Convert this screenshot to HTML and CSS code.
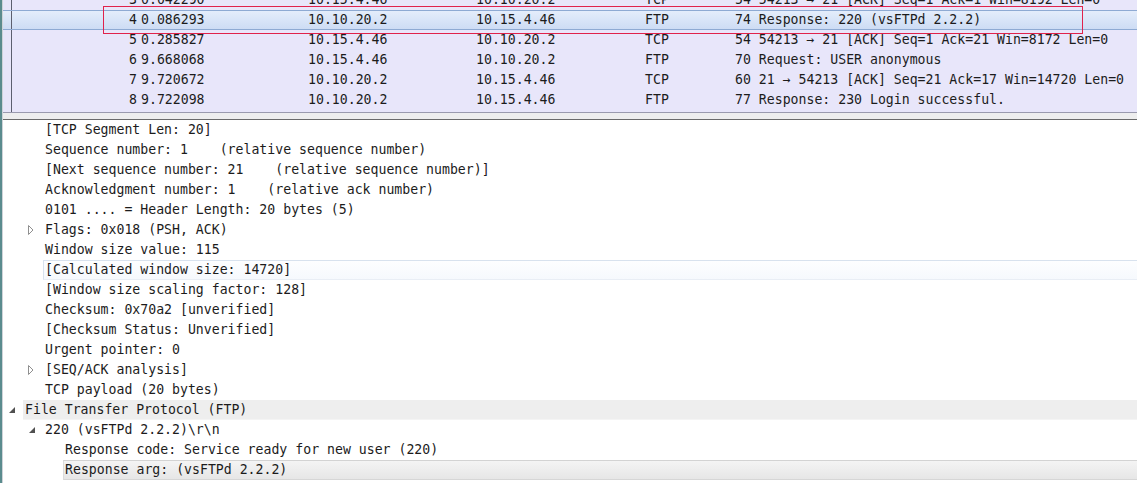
FILE: index.html
```html
<!DOCTYPE html>
<html>
<head>
<meta charset="utf-8">
<link rel="stylesheet" href="styles.css">
</head>
<body>
<div class="app">
  <div class="stripe"></div>
  <div class="main">
    <div class="plist">
      <div class="prows">
        <div class="prow"><span class="g"></span><span class="no">3</span><span class="t">0.042290</span><span class="src">10.15.4.46</span><span class="dst">10.10.20.2</span><span class="pr">TCP</span><span class="info">54 54213 → 21 [ACK] Seq=1 Ack=1 Win=8192 Len=0</span></div>
        <div class="prow sel"><span class="g"></span><span class="no">4</span><span class="t">0.086293</span><span class="src">10.10.20.2</span><span class="dst">10.15.4.46</span><span class="pr">FTP</span><span class="info">74 Response: 220 (vsFTPd 2.2.2)</span></div>
        <div class="prow"><span class="g"></span><span class="no">5</span><span class="t">0.285827</span><span class="src">10.15.4.46</span><span class="dst">10.10.20.2</span><span class="pr">TCP</span><span class="info">54 54213 → 21 [ACK] Seq=1 Ack=21 Win=8172 Len=0</span></div>
        <div class="prow"><span class="g"></span><span class="no">6</span><span class="t">9.668068</span><span class="src">10.15.4.46</span><span class="dst">10.10.20.2</span><span class="pr">FTP</span><span class="info">70 Request: USER anonymous</span></div>
        <div class="prow"><span class="g"></span><span class="no">7</span><span class="t">9.720672</span><span class="src">10.10.20.2</span><span class="dst">10.15.4.46</span><span class="pr">TCP</span><span class="info">60 21 → 54213 [ACK] Seq=21 Ack=17 Win=14720 Len=0</span></div>
        <div class="prow"><span class="g"></span><span class="no">8</span><span class="t">9.722098</span><span class="src">10.10.20.2</span><span class="dst">10.15.4.46</span><span class="pr">FTP</span><span class="info">77 Response: 230 Login successful.</span></div>
        <div class="prow"><span class="g"></span></div>
      </div>
      <div class="mark"></div>
    </div>
    <div class="splitter"></div>
    <div class="details">
      <div class="drow l1"><span class="tg"></span><span class="lb">[TCP Segment Len: 20]</span></div>
      <div class="drow l1"><span class="tg"></span><span class="lb">Sequence number: 1    (relative sequence number)</span></div>
      <div class="drow l1"><span class="tg"></span><span class="lb">[Next sequence number: 21    (relative sequence number)]</span></div>
      <div class="drow l1"><span class="tg"></span><span class="lb">Acknowledgment number: 1    (relative ack number)</span></div>
      <div class="drow l1"><span class="tg"></span><span class="lb">0101 .... = Header Length: 20 bytes (5)</span></div>
      <div class="drow l1"><span class="tg"><svg class="col" width="6" height="10" viewBox="0 0 6 10"><polygon points="0.5,0.5 5,5 0.5,9.5" fill="none" stroke="#8f8f8f" stroke-width="1"/></svg></span><span class="lb">Flags: 0x018 (PSH, ACK)</span></div>
      <div class="drow l1"><span class="tg"></span><span class="lb">Window size value: 115</span></div>
      <div class="drow l1"><span class="tg"></span><span class="lb hover">[Calculated window size: 14720]</span></div>
      <div class="drow l1"><span class="tg"></span><span class="lb">[Window size scaling factor: 128]</span></div>
      <div class="drow l1"><span class="tg"></span><span class="lb">Checksum: 0x70a2 [unverified]</span></div>
      <div class="drow l1"><span class="tg"></span><span class="lb">[Checksum Status: Unverified]</span></div>
      <div class="drow l1"><span class="tg"></span><span class="lb">Urgent pointer: 0</span></div>
      <div class="drow l1"><span class="tg"><svg class="col" width="6" height="10" viewBox="0 0 6 10"><polygon points="0.5,0.5 5,5 0.5,9.5" fill="none" stroke="#8f8f8f" stroke-width="1"/></svg></span><span class="lb">[SEQ/ACK analysis]</span></div>
      <div class="drow l1"><span class="tg"></span><span class="lb">TCP payload (20 bytes)</span></div>
      <div class="drow l0"><span class="tg"><svg class="exp" width="6" height="6" viewBox="0 0 6 6"><polygon points="6,0 6,6 0,6" fill="#505050"/></svg></span><span class="lb grey">File Transfer Protocol (FTP)</span></div>
      <div class="drow l1"><span class="tg"><svg class="exp" width="6" height="6" viewBox="0 0 6 6"><polygon points="6,0 6,6 0,6" fill="#505050"/></svg></span><span class="lb">220 (vsFTPd 2.2.2)\r\n</span></div>
      <div class="drow l2"><span class="tg"></span><span class="lb">Response code: Service ready for new user (220)</span></div>
      <div class="drow l2"><span class="tg"></span><span class="lb selg">Response arg: (vsFTPd 2.2.2)</span></div>
    </div>
  </div>
</div>
</body>
</html>
```

FILE: styles.css
```css
html, body {
  margin: 0;
  padding: 0;
  background: #ffffff;
  overflow: hidden;
}
body {
  width: 1137px;
  height: 483px;
  font-family: "DejaVu Sans Mono", "Liberation Mono", monospace;
  font-size: 13.2px;
  color: #1c1c1c;
}
.app {
  display: flex;
  height: 483px;
}
.stripe {
  width: 2px;
  background: #5b8c8e;
  border-right: 1px solid #cfd3d8;
  flex: none;
}
.main {
  flex: 1;
  display: flex;
  flex-direction: column;
  min-width: 0;
}
.plist {
  position: relative;
  height: 112px;
  overflow: hidden;
  background: #e8e6fa;
  border-bottom: 1px solid #9a9aae;
  flex: none;
}
.prows {
  margin-top: -10px;
}
.prow {
  display: flex;
  height: 20px;
  line-height: 20px;
  white-space: pre;
  box-sizing: border-box;
}
.prow .g {
  width: 8px;
  border-right: 1px solid #5c5f6e;
  flex: none;
}
.prow .no {
  width: 125px;
  text-align: right;
  flex: none;
}
.prow .t { width: 167px; margin-left: 4px; flex: none; }
.prow .src { width: 168px; flex: none; }
.prow .dst { width: 169px; flex: none; }
.prow .pr { width: 90px; flex: none; }
.prow .info { flex: 1; }
.prow.sel {
  background: linear-gradient(#e4edfb, #cddcf4);
  border-top: 1px solid #8eaad3;
  border-bottom: 1px solid #8eaad3;
  line-height: 18px;
}
.mark {
  position: absolute;
  left: 100px;
  top: 6px;
  width: 978px;
  height: 26px;
  border: 1px solid #e0224c;
}
.splitter {
  height: 6px;
  background: #eeeeee;
  border-bottom: 1px solid #6a6a6a;
  flex: none;
}
.details {
  flex: 1;
  background: #ffffff;
}
.drow {
  display: flex;
  height: 20px;
  line-height: 20px;
  white-space: pre;
}
.drow.l0 { padding-left: 2px; }
.drow.l1 { padding-left: 22px; }
.drow.l2 { padding-left: 42px; }
.tg {
  width: 18px;
  flex: none;
  display: flex;
  align-items: center;
}
.tg svg { margin-left: 3px; display: block; }
.tg svg.exp { margin-top: -1px; margin-left: 4px; }
.lb {
  flex: 1;
  padding-left: 2px;
  box-sizing: border-box;
}
.lb.hover {
  background: linear-gradient(#fdfeff, #f6f9fd);
  border-top: 1px solid #d8e2ee;
  border-left: 1px solid #d8e2ee;
  border-bottom: 1px solid #e9eef5;
  padding-left: 1px;
  line-height: 18px;
}
.lb.grey {
  background: #eeeeee;
  border-bottom: 1px solid #f4f4f4;
}
.lb.selg {
  background: linear-gradient(#f4f4f4, #e6e6e6);
  border-top: 1px solid #d3d3d3;
  border-left: 1px solid #dcdcdc;
  border-bottom: 1px solid #d6d6d6;
  padding-left: 1px;
  line-height: 18px;
}
```
